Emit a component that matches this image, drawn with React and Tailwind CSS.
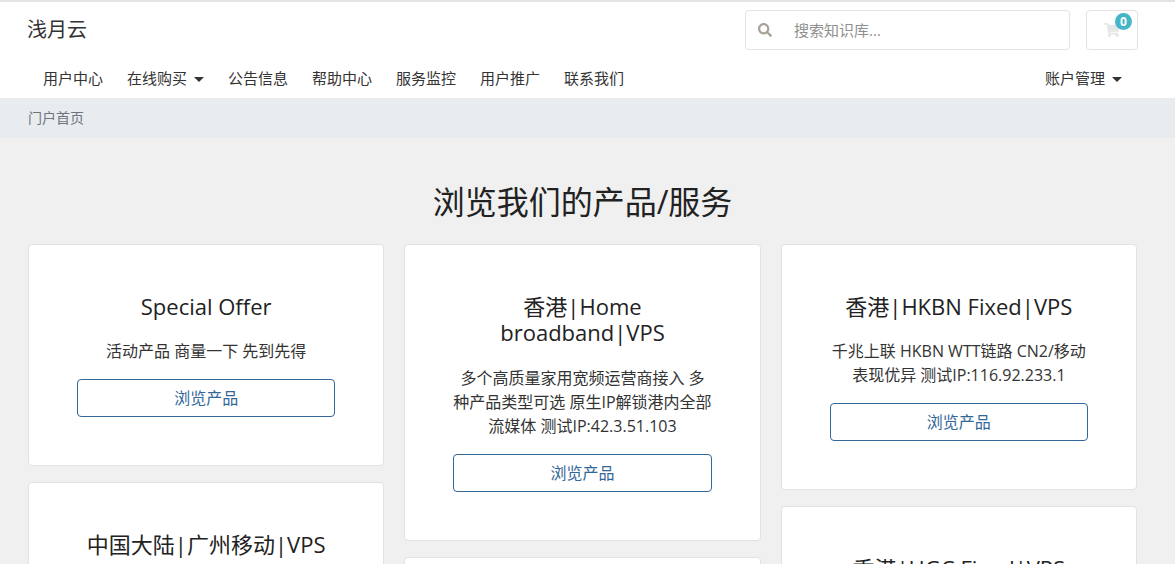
import React from "react";
import { FaSearch, FaShoppingCart } from "react-icons/fa";

const FONT = "font-['Open_Sans','Noto_Sans_CJK_SC',sans-serif]";

const columns = [
  [
    { title: "Special Offer", text: "活动产品 商量一下 先到先得" },
    { title: "中国大陆|广州移动|VPS", text: "广州移动 大带宽 低延迟" },
  ],
  [
    {
      title: "香港|Home broadband|VPS",
      text: "多个高质量家用宽频运营商接入 多种产品类型可选 原生IP解锁港内全部流媒体 测试IP:42.3.51.103",
    },
    { title: "香港|Home", text: "多个高质量家用宽频运营商接入" },
  ],
  [
    {
      title: "香港|HKBN Fixed|VPS",
      text: "千兆上联 HKBN WTT链路 CN2/移动表现优异 测试IP:116.92.233.1",
    },
    { title: "香港|HGC Fixed|VPS", text: "HGC 链路 表现优异" },
  ],
];

function Caret() {
  return <span className="inline-block ml-[7px] align-middle border-x-[5px] border-t-[5px] border-x-transparent border-t-[#333]" />;
}

function Card({ item }) {
  return (
    <div className="bg-white border border-[#e2e2e2] rounded-[4px] px-12 py-12 text-center">
      <h3 className="text-[22px] leading-[26.4px] text-[#222] mb-[20px]">{item.title}</h3>
      <p className="text-[16px] leading-[24px] text-[#333] mb-4">{item.text}</p>
      <a className="block h-[38px] leading-[36px] border border-[#336699] rounded-[4px] text-[16px] text-[#336699]">浏览产品</a>
    </div>
  );
}

export default function App() {
  return (
    <div className={`${FONT} h-[564px] overflow-hidden bg-[#f0f0f0] text-[#333]`}>
      <header className="bg-white border-t-2 border-[#e3e3e3] h-[98px]">
        <div className="flex justify-between pl-[27px] pr-[37px] pt-[8px]">
          <div className="text-[20px] leading-[40px] text-[#333]">浅月云</div>
          <div className="flex gap-4">
            <div className="relative flex items-center w-[325px] h-[40px] border border-[#e3e3e3] rounded-[4px]">
              <FaSearch className="ml-[12px] text-[14px] text-[#a9a299]" />
              <span className="ml-[22px] text-[15px] text-[#8f8f8f]">搜索知识库...</span>
            </div>
            <div className="relative flex items-center justify-center w-[52px] h-[40px] border border-[#e3e3e3] rounded-[4px]">
              <FaShoppingCart className="text-[16px] text-[#e6e6e6]" />
              <span className="absolute top-[2px] right-[5px] w-[17px] h-[17px] rounded-full bg-[#45b5c9] text-white text-[12px] leading-[17px] font-bold text-center">0</span>
            </div>
          </div>
        </div>
        <nav className="flex justify-between pl-[43px] pr-[53px] mt-[16px] text-[15px] leading-[24px] text-[#333]">
          <div className="flex gap-6">
            <a>用户中心</a>
            <a>在线购买<Caret /></a>
            <a>公告信息</a>
            <a>帮助中心</a>
            <a>服务监控</a>
            <a>用户推广</a>
            <a>联系我们</a>
          </div>
          <a>账户管理<Caret /></a>
        </nav>
      </header>

      <div className="h-[40px] bg-[#e9ecef] pl-[28px] text-[14px] leading-[40px] text-[#6c757d]">门户首页</div>

      <main className="pl-[28px] pr-[38px]">
        <h1 className="pt-[42px] h-[106px] text-[32px] leading-[44px] text-center text-[#222]">浏览我们的产品/服务</h1>
        <div className="grid grid-cols-3 gap-x-[20px]">
          {columns.map((col, i) => (
            <div key={i} className="flex flex-col gap-4">
              {col.map((item) => <Card key={item.title} item={item} />)}
            </div>
          ))}
        </div>
      </main>
    </div>
  );
}
